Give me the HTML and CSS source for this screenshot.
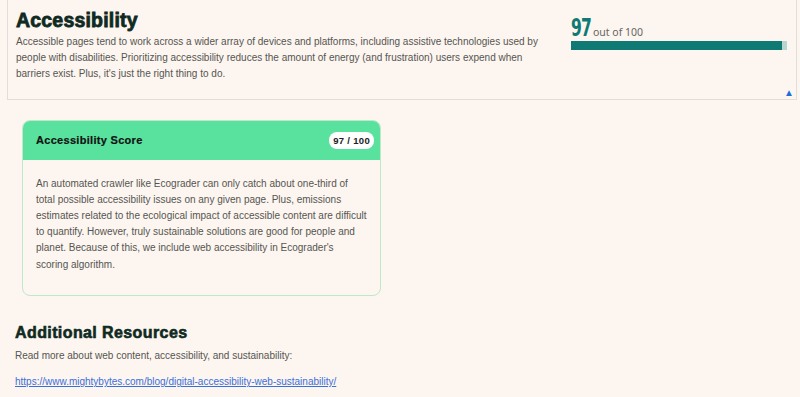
FILE: index.html
```html
<!DOCTYPE html>
<html>
  <head>
    <meta charset="utf-8" />
    <title>Accessibility</title>
    <link rel="stylesheet" href="styles.css">
  </head>
  <body>
    <div id="summary">
      <div class="summary-text">
        <h2 class="title">Accessibility</h2>
        <p class="lead">Accessible pages tend to work across a wider array of devices and platforms, including assistive technologies used by people with disabilities. Prioritizing accessibility reduces the amount of energy (and frustration) users expend when barriers exist. Plus, it's just the right thing to do.</p>
      </div>
      <div class="summary-score">
        <div class="score-line"><span class="score-big">97</span><span class="score-out">out of 100</span></div>
        <div class="score-bar"><div class="score-fill" style="width: 97.5%"></div></div>
      </div>
      <span class="toggle">&#9650;</span>
    </div>

    <div class="card">
      <div class="card-head">
        <span class="card-title">Accessibility Score</span>
        <span class="badge">97 / 100</span>
      </div>
      <div class="card-body">
        An automated crawler like Ecograder can only catch about one-third of total possible accessibility issues on any given page. Plus, emissions estimates related to the ecological impact of accessible content are difficult to quantify. However, truly sustainable solutions are good for people and planet. Because of this, we include web accessibility in Ecograder's scoring algorithm.
      </div>
    </div>

    <div id="resources">
      <h3 class="subtitle">Additional Resources</h3>
      <p class="lead">Read more about web content, accessibility, and sustainability:</p>
      <a class="link" href="#">https://www.mightybytes.com/blog/digital-accessibility-web-sustainability/</a>
    </div>
  </body>
</html>
```

FILE: styles.css
```css
body {
  margin: 0;
  font-family: 'Liberation Sans', Arial, sans-serif;
  color: #555552;
  background-color: #fdf5ef;
}

#summary {
  position: relative;
  margin: 0 3px 0 7px;
  padding: 8px 9px 16px 8px;
  border: 1px solid #e2ddd8;
  border-top: 0;
  display: grid;
  grid-template-columns: 1fr 216px;
  column-gap: 28px;
}

.title {
  margin: 0;
  font-family: 'Liberation Sans', Arial, sans-serif;
  font-weight: 900;
  font-size: 19.5px;
  line-height: 24px;
  color: #0f2a22;
  -webkit-text-stroke: 0.8px #0f2a22;
  letter-spacing: 0.2px;
}

.lead {
  margin: 2px 0 0;
  font-size: 10px;
  line-height: 16.2px;
}

.summary-score {
  padding-top: 6px;
}

.score-line {
  display: flex;
  align-items: baseline;
  height: 26px;
}

.score-big {
  font-family: 'DejaVu Sans Condensed', 'DejaVu Sans', sans-serif;
  font-stretch: condensed;
  font-weight: bold;
  font-size: 24px;
  color: #0f7a73;
  transform: scaleX(0.72);
  transform-origin: left;
  display: inline-block;
  width: 21px;
  letter-spacing: -1px;
}

.score-out {
  font-family: 'Noto Sans', sans-serif;
  font-size: 10.5px;
  color: #666;
  margin-left: 1px;
}

.score-bar {
  margin-top: 1px;
  height: 9px;
  background-color: #b9d5d0;
}

.score-fill {
  height: 100%;
  background-color: #0f7a73;
}

.toggle {
  position: absolute;
  right: 2px;
  bottom: 1px;
  font-size: 10px;
  color: #1e6fd9;
}

.card {
  margin: 20px 0 0 22px;
  width: 357px;
  border: 1px solid #bfe8c9;
  border-radius: 8px;
  overflow: hidden;
}

.card-head {
  display: flex;
  justify-content: space-between;
  align-items: center;
  height: 39px;
  padding: 0 6px 0 13px;
  background-color: #58e29e;
}

.card-title {
  font-weight: bold;
  font-size: 11px;
  color: #111;
  letter-spacing: 0.3px;
  -webkit-text-stroke: 0.2px #111;
}

.badge {
  background-color: #fff;
  border-radius: 8px;
  padding: 3px 4px;
  font-weight: bold;
  font-size: 9.5px;
  color: #222;
  letter-spacing: 0.3px;
}

.card-body {
  padding: 16px 13px 22px;
  font-size: 10px;
  line-height: 16.2px;
}

#resources {
  padding: 27px 15px 0;
}

.subtitle {
  margin: 0;
  font-weight: 900;
  font-size: 16px;
  line-height: 20px;
  color: #0f2a22;
  -webkit-text-stroke: 0.6px #0f2a22;
  letter-spacing: 0.4px;
}

#resources .lead {
  margin: 5px 0 7px;
}

.link {
  font-size: 10px;
  color: #3a6fd8;
}
```
